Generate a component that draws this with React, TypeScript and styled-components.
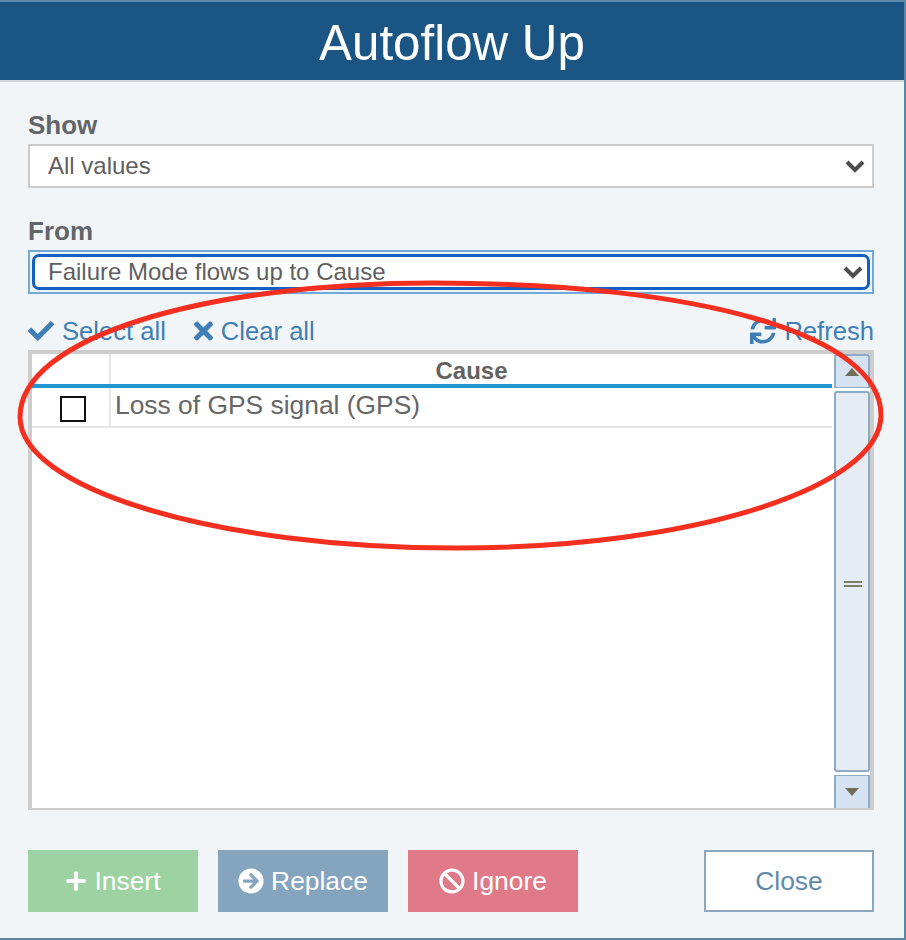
import React from "react";
import styled, { createGlobalStyle } from "styled-components";
import {
  FaArrowCircleRight,
  FaBan,
  FaCheck,
  FaPlus,
  FaSync,
  FaTimes,
} from "react-icons/fa";

const GlobalStyle = createGlobalStyle`
  html, body {
    margin: 0;
    padding: 0;
    background: #f2f5f8;
  }
  * {
    box-sizing: border-box;
  }
`;

const Dialog = styled.div`
  position: relative;
  width: 906px;
  height: 940px;
  display: flex;
  flex-direction: column;
  background: #f2f5f8;
  border-top: 2px solid #5f8aab;
  border-right: 2px solid #5a86a6;
  border-bottom: 2px solid #5a86a6;
  font-family: "Liberation Sans", Arial, sans-serif;
  color: #666;
  overflow: hidden;
`;

const Header = styled.header`
  height: 80px;
  flex: none;
  display: flex;
  align-items: center;
  justify-content: center;
  padding-top: 2px;
  background: #1b5583;
  border-bottom: 2px solid #d3d8dc;
  color: #fff;
  font-size: 49.3px;
`;

const Body = styled.div`
  flex: 1;
  display: flex;
  flex-direction: column;
  padding: 28px 30px 0 28px;
`;

const Field = styled.div`
  & + & {
    margin-top: 28px;
  }
`;

const Label = styled.div`
  height: 30px;
  line-height: 30px;
  margin-bottom: 4px;
  font-size: 26px;
  font-weight: 700;
  color: #626568;
`;

const SelectBox = styled.div<{ $focused?: boolean }>`
  height: 44px;
  padding: ${(p) => (p.$focused ? "2px" : "0")};
  border: 2px solid ${(p) => (p.$focused ? "#6ea8dc" : "#cbcbcb")};
  background: ${(p) => (p.$focused ? "#eef4fb" : "#fff")};
`;

const SelectInner = styled.div<{ $focused?: boolean }>`
  height: 100%;
  display: flex;
  align-items: center;
  justify-content: space-between;
  padding: ${(p) => (p.$focused ? "0 4px 0 13px" : "0 7px 0 18px")};
  background: #fff;
  border: ${(p) => (p.$focused ? "3px solid #1460c2" : "none")};
  border-radius: ${(p) => (p.$focused ? "7px" : "0")};
  font-size: 24px;
  color: #5f5f5f;
`;

const Toolbar = styled.div`
  height: 30px;
  margin: 22px 0 4px;
  display: flex;
  align-items: center;
  gap: 28px;
  font-size: 25.6px;
  color: #3f7fb5;
`;

const ToolLink = styled.span<{ $push?: boolean }>`
  display: inline-flex;
  align-items: center;
  gap: 8px;
  margin-left: ${(p) => (p.$push ? "auto" : "0")};
  svg {
    flex: none;
  }
`;

const ClearIcon = styled(FaTimes)`
  width: 19px;
  height: 28px;
`;

const Grid = styled.div`
  height: 460px;
  display: flex;
  background: #fff;
  border-style: solid;
  border-color: #cdcdcd;
  border-width: 4px 4px 2px 4px;
`;

const GridMain = styled.div`
  width: 800px;
  flex: none;
`;

const GridHead = styled.div`
  height: 34px;
  display: flex;
  border-bottom: 4px solid #2196d3;
`;

const CheckCell = styled.div`
  width: 79px;
  flex: none;
  display: flex;
  align-items: center;
  justify-content: center;
  padding: 4px 0 0 5px;
  border-right: 2px solid #e6e6e6;
`;

const HeadTitle = styled.div`
  flex: 1;
  text-align: center;
  font-size: 24px;
  font-weight: 700;
  line-height: 34px;
  color: #626262;
`;

const GridRow = styled.div`
  height: 40px;
  display: flex;
  border-bottom: 2px solid #e6e6e6;
`;

const RowText = styled.div`
  flex: 1;
  padding-left: 4px;
  font-size: 26.4px;
  line-height: 34px;
  color: #666;
`;

const CheckBox = styled.span`
  width: 26px;
  height: 26px;
  border: 2px solid #111;
  background: #fff;
`;

const ScrollBar = styled.div`
  width: 36px;
  margin-left: 2px;
  display: flex;
  flex-direction: column;
  gap: 3px;
`;

const ScrollButton = styled.div<{ $up?: boolean }>`
  height: ${(p) => (p.$up ? "34px" : "33px")};
  flex: none;
  display: flex;
  align-items: center;
  justify-content: center;
  background: #d5e2f2;
  border: 2px solid #8da9c4;
  border-width: ${(p) => (p.$up ? "2px 2px 1px" : "1px 2px 0")};
  border-radius: ${(p) => (p.$up ? "3px 3px 0 0" : "0")};
`;

const Arrow = styled.span<{ $up?: boolean }>`
  width: 0;
  height: 0;
  border-left: 7px solid transparent;
  border-right: 7px solid transparent;
  border-${(p) => (p.$up ? "bottom" : "top")}: 8px solid #6f6f58;
`;

const ScrollThumb = styled.div`
  flex: 1;
  display: flex;
  align-items: center;
  justify-content: center;
  padding: 4px 0 0 2px;
  background: #e6ecf4;
  border: 2px solid #8da9c4;
  border-radius: 3px;
`;

const Grip = styled.span`
  width: 18px;
  height: 6px;
  border-top: 2px solid #7c7c70;
  border-bottom: 2px solid #7c7c70;
`;

const Footer = styled.div`
  margin-top: 40px;
  display: flex;
  gap: 20px;
`;

const ActionButton = styled.button<{ $color: string }>`
  width: 170px;
  height: 62px;
  display: flex;
  align-items: center;
  justify-content: center;
  gap: 7px;
  padding: 0;
  border: none;
  background: ${(p) => p.$color};
  color: #fff;
  font: 26.4px "Liberation Sans", Arial, sans-serif;
`;

const CloseButton = styled.button`
  width: 170px;
  height: 62px;
  margin-left: auto;
  padding: 0;
  background: #fff;
  border: 2px solid #8aa7c0;
  color: #5f8aad;
  font: 26.4px "Liberation Sans", Arial, sans-serif;
`;

const Annotation = styled.svg`
  position: absolute;
  left: 0;
  top: -2px;
  pointer-events: none;
`;

const Chevron = () => (
  <svg width="20" height="14" viewBox="0 0 20 14">
    <polyline
      points="2,3 10,11 18,3"
      fill="none"
      stroke="#4d4d4d"
      strokeWidth="4"
    />
  </svg>
);

export default function App() {
  return (
    <>
      <GlobalStyle />
      <Dialog>
        <Header>Autoflow Up</Header>
        <Body>
          <Field>
            <Label>Show</Label>
            <SelectBox>
              <SelectInner>
                All values
                <Chevron />
              </SelectInner>
            </SelectBox>
          </Field>
          <Field>
            <Label>From</Label>
            <SelectBox $focused>
              <SelectInner $focused>
                Failure Mode flows up to Cause
                <Chevron />
              </SelectInner>
            </SelectBox>
          </Field>
          <Toolbar>
            <ToolLink>
              <FaCheck size={26} />
              Select all
            </ToolLink>
            <ToolLink>
              <ClearIcon />
              Clear all
            </ToolLink>
            <ToolLink $push>
              <FaSync size={26} />
              Refresh
            </ToolLink>
          </Toolbar>
          <Grid>
            <GridMain>
              <GridHead>
                <CheckCell />
                <HeadTitle>Cause</HeadTitle>
              </GridHead>
              <GridRow>
                <CheckCell>
                  <CheckBox />
                </CheckCell>
                <RowText>Loss of GPS signal (GPS)</RowText>
              </GridRow>
            </GridMain>
            <ScrollBar>
              <ScrollButton $up>
                <Arrow $up />
              </ScrollButton>
              <ScrollThumb>
                <Grip />
              </ScrollThumb>
              <ScrollButton>
                <Arrow />
              </ScrollButton>
            </ScrollBar>
          </Grid>
          <Footer>
            <ActionButton $color="#9dd3a2">
              <FaPlus size={22} />
              Insert
            </ActionButton>
            <ActionButton $color="#85a4be">
              <FaArrowCircleRight size={26} />
              Replace
            </ActionButton>
            <ActionButton $color="#e07a88">
              <FaBan size={26} />
              Ignore
            </ActionButton>
            <CloseButton>Close</CloseButton>
          </Footer>
        </Body>
        <Annotation width="906" height="940" viewBox="0 0 906 940">
          <path
            d="M20,417 C20,337 205,283 433,283 C700,283 881,335 881,415 C881,488 691,548 457,548 C216,548 20,489 20,417 Z"
            fill="none"
            stroke="#f42f20"
            strokeWidth="5"
          />
        </Annotation>
      </Dialog>
    </>
  );
}
